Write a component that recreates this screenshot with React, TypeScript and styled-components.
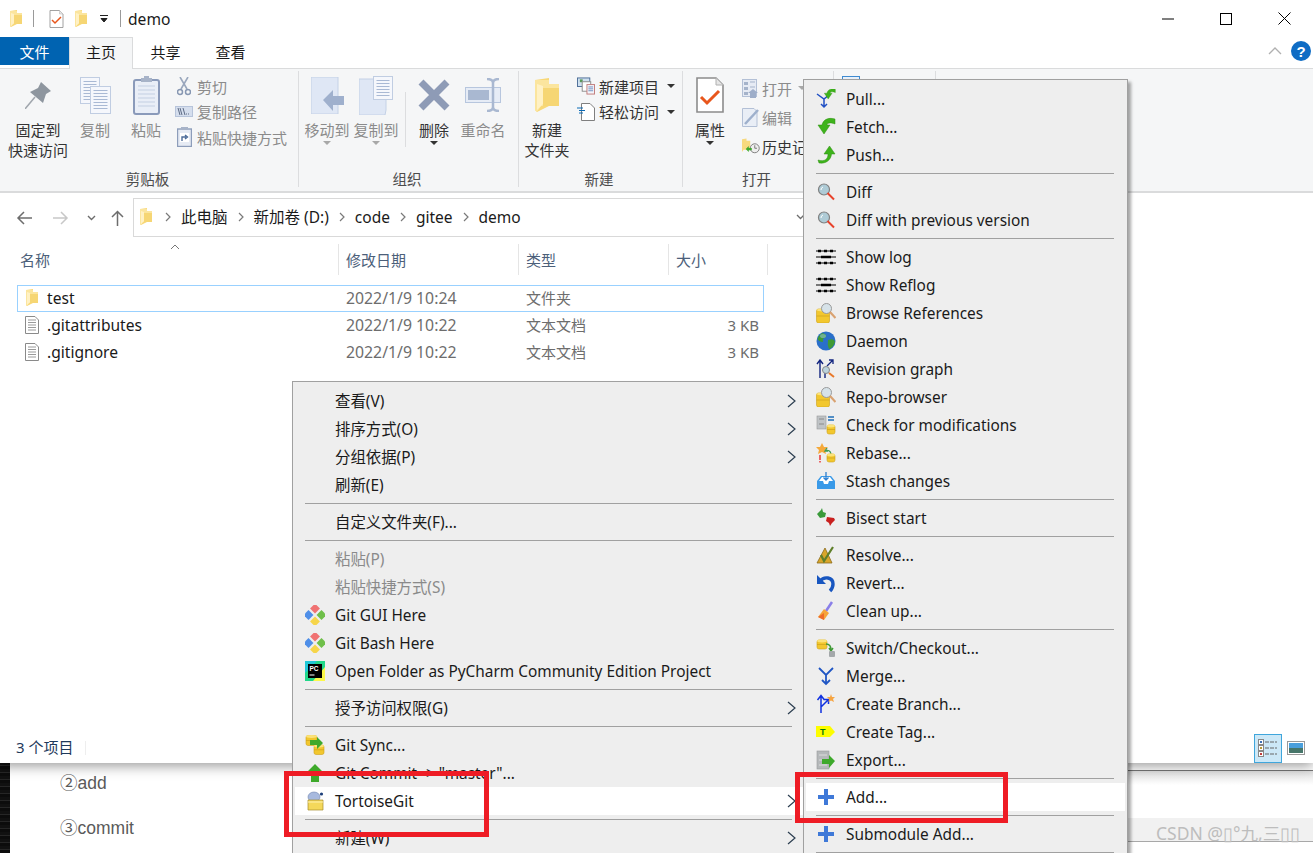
import * as React from "react";
import styled, { createGlobalStyle } from "styled-components";

const UI_FONT = `"Noto Sans", "Noto Sans CJK SC", sans-serif`;

const GlobalStyle = createGlobalStyle`
  html, body {
    margin: 0;
    padding: 0;
    background: #fff;
  }
  body {
    font-family: ${UI_FONT};
    font-size: 15px;
    color: #1a1a1a;
  }
`;

const Page = styled.div`
  position: relative;
  width: 1313px;
  height: 853px;
  overflow: hidden;
  display: flex;
  flex-direction: column;
`;

const ExplorerWindow = styled.div`
  position: relative;
  z-index: 1;
  height: 763px;
  flex: none;
  display: flex;
  flex-direction: column;
  background: #fff;
  box-shadow: 0 3px 12px rgba(0, 0, 0, 0.4);
`;

const TitleBar = styled.div`
  height: 37px;
  display: flex;
  align-items: center;
  padding-left: 10px;
`;

const TitleDivider = styled.div`
  width: 1px;
  height: 17px;
  background: #9a9a9a;
`;

const TitleSpacer = styled.div<{ $width: number }>`
  width: ${(p) => p.$width}px;
  flex: none;
`;

const WindowTitle = styled.span`
  font-size: 15.6px;
`;

const WindowButtons = styled.div`
  margin-left: auto;
  display: flex;
  align-items: center;
`;

const WindowButton = styled.div`
  width: 58px;
  height: 37px;
  display: flex;
  align-items: center;
  justify-content: center;
`;

const TabBar = styled.div`
  height: 32px;
  display: flex;
  box-sizing: border-box;
  border-bottom: 1px solid #dadbdc;
`;

const FileTab = styled.div`
  width: 69px;
  height: 28px;
  background: #0063b1;
  color: #fff;
  display: flex;
  align-items: center;
  justify-content: center;
  font-size: 15px;
`;

const Tab = styled.div<{ $active?: boolean }>`
  width: ${(p) => (p.$active ? 64 : 65)}px;
  height: 32px;
  box-sizing: border-box;
  display: flex;
  align-items: center;
  justify-content: center;
  padding-bottom: 5px;
  font-size: 15px;
  background: ${(p) => (p.$active ? "#f5f6f7" : "transparent")};
  border: 1px solid ${(p) => (p.$active ? "#dadbdc" : "transparent")};
  border-bottom: 0;
`;

const HelpArea = styled.div`
  margin-left: auto;
  display: flex;
  align-items: center;
  gap: 9px;
  padding: 0 2px 4px 0;
`;

const Ribbon = styled.div`
  height: 124px;
  flex: none;
  display: flex;
  box-sizing: border-box;
  background: #f5f6f7;
  border-bottom: 2px solid #dadbdc;
`;

const RibbonGroup = styled.div<{ $width: number }>`
  width: ${(p) => p.$width}px;
  flex: none;
  box-sizing: border-box;
  display: flex;
  flex-direction: column;
  margin: 2px 0 4px;
  border-right: 1px solid #dcdddf;
`;

const GroupBody = styled.div<{ $pad?: number }>`
  flex: 1;
  display: flex;
  align-items: flex-start;
  padding: 5px 0 0 ${(p) => p.$pad ?? 4}px;
`;

const GroupLabel = styled.div`
  height: 17px;
  padding-right: 3px;
  text-align: center;
  font-size: 14.5px;
  line-height: 18px;
  color: #4c4c4c;
`;

const LargeButton = styled.div<{ $width: number; $dim?: boolean }>`
  width: ${(p) => p.$width}px;
  flex: none;
  display: flex;
  flex-direction: column;
  align-items: center;
  text-align: center;
  font-size: 15px;
  line-height: 20px;
  color: ${(p) => (p.$dim ? "#8b8b8b" : "#333")};
  white-space: nowrap;
`;

const LargeIcon = styled.div`
  height: 38px;
  margin-bottom: 6px;
  display: flex;
  align-items: center;
`;

const ButtonCaret = styled.div<{ $dim?: boolean }>`
  width: 0;
  height: 0;
  margin-top: 1px;
  border-left: 4px solid transparent;
  border-right: 4px solid transparent;
  border-top: 4px solid ${(p) => (p.$dim ? "#a8a8a8" : "#333")};
`;

const InlineCaret = styled(ButtonCaret)`
  margin: 0 0 0 4px;
`;

const SmallColumn = styled.div<{ $gap: number; $left: number; $top?: number }>`
  display: flex;
  flex-direction: column;
  gap: ${(p) => p.$gap}px;
  margin-left: ${(p) => p.$left}px;
  margin-top: ${(p) => p.$top ?? 0}px;
`;

const SmallButton = styled.div<{ $dim?: boolean; $gap?: number }>`
  display: flex;
  align-items: center;
  gap: ${(p) => p.$gap ?? 4}px;
  height: 22px;
  font-size: 15px;
  white-space: nowrap;
  color: ${(p) => (p.$dim ? "#8b8b8b" : "#333")};
`;

const SmallIcon = styled.div<{ $center?: boolean }>`
  width: 18px;
  flex: none;
  display: flex;
  justify-content: ${(p) => (p.$center ? "center" : "flex-start")};
`;

const GroupRule = styled.div`
  width: 1px;
  height: 55px;
  margin: 16px 4px 0 4px;
  background: #dcdddf;
  flex: none;
`;

const RibbonRest = styled.div`
  flex: 1;
`;

const NavBar = styled.div`
  height: 50px;
  flex: none;
  display: flex;
  align-items: flex-start;
  padding-top: 5px;
  box-sizing: border-box;
`;

const NavButtons = styled.div`
  width: 133px;
  height: 39px;
  flex: none;
  display: flex;
  align-items: center;
  padding-left: 16px;
  box-sizing: border-box;
`;

const NavIcon = styled.svg<{ $gap?: number }>`
  flex: none;
  margin-left: ${(p) => p.$gap ?? 0}px;
`;

const AddressBox = styled.div`
  width: 697px;
  height: 39px;
  box-sizing: border-box;
  border: 1px solid #d9d9d9;
  display: flex;
  align-items: center;
  padding: 0 0 2px 6px;
  font-size: 15.5px;
`;

const Crumb = styled.span`
  margin: 0 7px;
  white-space: nowrap;
`;

const CrumbArrow = styled.svg`
  width: 6px;
  height: 10px;
  margin: 0 3px;
  flex: none;
`;

const CrumbFolder = styled.div`
  width: 22px;
  display: flex;
`;

const AddressChevron = styled.svg`
  width: 9px;
  height: 6px;
  margin: 0 24px 0 auto;
`;

const ColumnHeader = styled.div`
  height: 34px;
  flex: none;
  display: grid;
  grid-template-columns: 338px 180px 150px 100px;
  font-size: 15px;
  color: #4c607a;
`;

const HeaderCell = styled.div<{ $first?: boolean }>`
  position: relative;
  display: flex;
  align-items: center;
  box-sizing: border-box;
  padding-left: ${(p) => (p.$first ? 20 : 7)}px;
  border-left: ${(p) => (p.$first ? "none" : "1px solid #e5e5e5")};
  margin: 1px 0 2px;
`;

const LastHeader = styled(HeaderCell)`
  border-right: 1px solid #e5e5e5;
`;

const SortCaret = styled.svg`
  position: absolute;
  left: 170px;
  top: 0;
  width: 10px;
  height: 6px;
`;

const FileList = styled.div`
  flex: 1;
  padding: 8px 0 0 17px;
  display: flex;
  flex-direction: column;
  align-items: flex-start;
`;

const FileRow = styled.div<{ $selected?: boolean }>`
  width: 747px;
  height: 27px;
  box-sizing: border-box;
  padding-bottom: 2px;
  display: grid;
  grid-template-columns: 328px 180px 150px 1fr;
  align-items: center;
  font-size: 15.6px;
  border: 1px solid ${(p) => (p.$selected ? "#99d1ff" : "transparent")};
`;

const FileName = styled.div`
  display: flex;
  align-items: center;
  gap: 8px;
  padding-left: 7px;
`;

const FileMeta = styled.div<{ $right?: boolean; $wide?: boolean }>`
  color: #6d6d6d;
  font-size: ${(p) => (p.$wide ? 15.8 : 15)}px;
  text-align: ${(p) => (p.$right ? "right" : "left")};
  padding-right: ${(p) => (p.$right ? 4 : 0)}px;
`;

const StatusBar = styled.div`
  height: 30px;
  flex: none;
  display: flex;
  align-items: center;
  padding-left: 16px;
  font-size: 15px;
  color: #1e395b;
`;

const StatusLabel = styled.span`
  padding-bottom: 4px;
`;

const StatusRule = styled.div`
  width: 1px;
  height: 14px;
  background: #eee;
  margin-left: 12px;
`;

const ViewButtons = styled.div`
  margin-left: auto;
  display: flex;
  align-items: center;
  padding-right: 3px;
`;

const ViewButton = styled.div<{ $active?: boolean }>`
  width: 28px;
  height: 29px;
  box-sizing: border-box;
  display: flex;
  align-items: center;
  justify-content: center;
  background: ${(p) => (p.$active ? "#cce8f7" : "transparent")};
  border: 1px solid ${(p) => (p.$active ? "#3fa6dc" : "transparent")};
`;

const Below = styled.div`
  flex: 1;
  display: flex;
  min-height: 0;
`;

const DarkStrip = styled.div`
  width: 10px;
  background: repeating-linear-gradient(0deg, #0c0c0c 0 3px, #262626 3px 4px, #111 4px 7px);
`;

const Article = styled.div`
  flex: 1;
  padding: 8px 0 0 50px;
  font-family: "Liberation Sans", "Noto Sans CJK SC", sans-serif;
  font-size: 17.5px;
  line-height: 24px;
  color: #5a5a5a;
`;

const ArticleLine = styled.div`
  height: 45px;
`;

const ThirdPanel = styled.div`
  width: 186px;
  margin-top: 7px;
  border-top: 1px solid #777;
  background: linear-gradient(#e0e0e0, #fff 14px);
  display: flex;
  flex-direction: column;
  justify-content: flex-end;
  padding-bottom: 11px;
`;

const Watermark = styled.div`
  height: 24px;
  box-sizing: border-box;
  background: #f1f1f1;
  border-bottom: 1px solid #a8a8a8;
  font-size: 17.5px;
  line-height: 24px;
  padding: 3px 0 0 29px;
  color: #bdbdbd;
  white-space: nowrap;
`;

const Menu = styled.div<{ $left: number; $top: number; $width: number; $layer: number }>`
  position: absolute;
  z-index: ${(p) => p.$layer};
  left: ${(p) => p.$left}px;
  top: ${(p) => p.$top}px;
  width: ${(p) => p.$width}px;
  height: ${(p) => 853 - p.$top + 10}px;
  box-sizing: border-box;
  padding-top: 5px;
  background: #eee;
  border: 1px solid #a0a0a0;
  box-shadow: 3px 3px 3px rgba(0, 0, 0, 0.35);
`;

const MenuRow = styled.div<{ $hover?: boolean; $dim?: boolean }>`
  height: 28px;
  box-sizing: border-box;
  margin: 0 2px;
  padding: 0 7px 0 10px;
  display: flex;
  align-items: center;
  font-size: 15.4px;
  white-space: nowrap;
  background: ${(p) => (p.$hover ? "#fff" : "transparent")};
  color: ${(p) => (p.$dim ? "#8a8a8a" : "#1a1a1a")};
`;

const MenuIcon = styled.div`
  width: 20px;
  height: 20px;
  flex: none;
  margin-right: 10px;
`;

const MenuLabel = styled.span<{ $raised?: boolean }>`
  padding-bottom: ${(p) => (p.$raised ? 2 : 0)}px;
`;

const MenuArrow = styled.svg`
  width: 9px;
  height: 14px;
  margin-left: auto;
`;

const MenuSeparator = styled.div`
  height: 1px;
  margin: 4px 13px 4px 12px;
  background: #a0a0a0;
`;

const RedBox = styled.div<{ $left: number; $top: number; $width: number; $height: number }>`
  position: absolute;
  z-index: 5;
  left: ${(p) => p.$left}px;
  top: ${(p) => p.$top}px;
  width: ${(p) => p.$width}px;
  height: ${(p) => p.$height}px;
  box-sizing: border-box;
  border: 5px solid #ee1c25;
`;

const FolderIcon = ({ w = 12, h = 17 }: { w?: number; h?: number }) => (
  <svg width={w} height={h} viewBox="0 0 12 17">
    <path d="M0 1 L7 0 V14 L1 17 L0 16 Z" fill="#f8d878" />
    <path d="M0 1 H7 V3 H12 V14 H3 L1 17 L0 16 Z" fill="#fbe59e" />
    <path d="M1 3 L4 4 V13 L1 16 Z" fill="#fff1c4" />
    <path d="M4 5 H12 V14 H4 Z" fill="#f6d674" />
  </svg>
);

const CheckDocIcon = ({ w = 15, h = 18 }: { w?: number; h?: number }) => (
  <svg width={w} height={h} viewBox="0 0 28 36">
    <path d="M1 1 H20 L27 8 V35 H1 Z" fill="#fff" stroke="#8c8c8c" strokeWidth="1.6" />
    <path d="M20 1 V8 H27" fill="#e6e6e6" stroke="#b0b0b0" />
    <path d="M5 20 L11 26 L23 14" fill="none" stroke="#e8561c" strokeWidth="3" />
  </svg>
);

const DocLines = ({ x, y, w, h }: { x: number; y: number; w: number; h: number }) => (
  <g>
    <rect x={x} y={y} width={w} height={h} fill="#f5f7fc" stroke="#c0cde2" />
    {Array.from({ length: Math.floor((h - 4) / 3) }).map((_, i) => (
      <line key={i} x1={x + 3} x2={x + w - 3} y1={y + 4 + i * 3} y2={y + 4 + i * 3} stroke="#a9b9d4" />
    ))}
  </g>
);

const PinIcon = () => (
  <svg width="27" height="28" viewBox="0 0 27 28">
    <path d="M0 28 L10 16" stroke="#a0a6ad" strokeWidth="1.5" />
    <path d="M16 1 L26 10 L21 13 L18 22 L5 11 L13 7 Z" fill="#8e969f" />
  </svg>
);

const CopyIcon = () => (
  <svg width="31" height="37" viewBox="0 0 31 37">
    <DocLines x={0.5} y={0.5} w={19} h={26} />
    <DocLines x={10.5} y={9.5} w={20} h={27} />
  </svg>
);

const ClipboardIcon = () => (
  <svg width="27" height="39" viewBox="0 0 27 39">
    <rect x="1" y="4" width="25" height="34" rx="2" fill="#e9eef7" stroke="#8a9aba" strokeWidth="2" />
    {[10, 14, 18, 22, 26, 30].map((y) => (
      <line key={y} x1="5" x2="22" y1={y} y2={y} stroke="#c3cfe2" />
    ))}
    <rect x="8" y="2" width="11" height="4" fill="#a7b3c8" />
    <rect x="11" y="0" width="5" height="3" fill="#a7b3c8" />
  </svg>
);

const ScissorsIcon = () => (
  <svg width="14" height="19" viewBox="0 0 14 19">
    <path d="M3 0 L10 12 M11 0 L4 12" stroke="#9aa7bd" strokeWidth="1.6" fill="none" />
    <circle cx="3" cy="15" r="2.5" fill="none" stroke="#8797b2" strokeWidth="1.5" />
    <circle cx="11" cy="15" r="2.5" fill="none" stroke="#8797b2" strokeWidth="1.5" />
  </svg>
);

const PathIcon = () => (
  <svg width="18" height="11" viewBox="0 0 18 11">
    <rect x="0.5" y="0.5" width="17" height="10" fill="#d5deed" stroke="#b7c4da" />
    <path d="M3 2 L5 9 M5 2 L7 9 M8 2 L10 9" stroke="#5d6b85" strokeWidth="1" />
    <path d="M11 8 H15" stroke="#5d6b85" strokeDasharray="1 1" />
  </svg>
);

const ShortcutIcon = () => (
  <svg width="15" height="20" viewBox="0 0 15 20">
    <rect x="0.5" y="2" width="14" height="17.5" fill="#e6ebf4" stroke="#8d9dba" strokeWidth="1.4" />
    <rect x="4" y="0" width="7" height="3" fill="#a7b3c8" />
    <rect x="3" y="6" width="9" height="9" fill="#fff" />
    <path d="M5 14 V10 H9 M8 8 L10.5 10 L8 12" stroke="#4c6c99" fill="none" strokeWidth="1.4" />
  </svg>
);

const MoveToIcon = () => (
  <svg width="33" height="37" viewBox="0 0 33 37">
    <path d="M0 0 H27 V37 H0 Z" fill="#dfe7f5" stroke="#c4d1e6" />
    <path d="M12 23 L22 13 V19 H33 V28 H22 V34 Z" fill="#9fb0cd" />
  </svg>
);

const CopyToIcon = () => (
  <svg width="34" height="39" viewBox="0 0 34 39">
    <path d="M0 3 H27 V34 L26 39 H0 Z" fill="#dfe7f5" stroke="#c4d1e6" />
    <DocLines x={14.5} y={0.5} w={19} h={23} />
  </svg>
);

const DeleteIcon = () => (
  <svg width="32" height="32" viewBox="0 0 32 32">
    <path d="M3 3 L29 29 M29 3 L3 29" stroke="#8e9bb6" strokeWidth="7" />
  </svg>
);

const RenameIcon = () => (
  <svg width="36" height="34" viewBox="0 0 36 34">
    <rect x="0.5" y="9.5" width="35" height="15" fill="#e6ecf6" stroke="#b7c6de" />
    <rect x="3" y="12" width="21" height="10" fill="#a9b8d1" />
    <path d="M22 1 Q28 1 28 5 V29 Q28 33 22 33 M34 1 Q28 1 28 5 V29 Q28 33 34 33" fill="none" stroke="#a9b8d1" strokeWidth="2.5" />
  </svg>
);

const NewItemIcon = () => (
  <svg width="19" height="18" viewBox="0 0 19 18">
    <rect x="0.5" y="0.5" width="13" height="9" fill="#cfe0f0" stroke="#4a6c96" />
    <rect x="3" y="2" width="3" height="3" fill="#5a9a5a" />
    <rect x="5.5" y="4.5" width="9" height="10" fill="#fff" stroke="#8c8c8c" />
    <rect x="10.5" y="7.5" width="8" height="10" fill="#f3f4fa" stroke="#c07a7a" />
    <path d="M12 10 H17 M12 12 H17 M12 14 H17" stroke="#6f8fc0" />
  </svg>
);

const EasyAccessIcon = () => (
  <svg width="18" height="18" viewBox="0 0 18 18">
    <path d="M4.5 0.5 H13 L17.5 5 V17.5 H4.5 Z" fill="#fff" stroke="#7f7f7f" />
    <path d="M0 5 H6 M2 7.5 H8 M2 10 H6" stroke="#0a6ab5" strokeWidth="1.2" />
  </svg>
);

const OpenIcon = () => (
  <svg width="17" height="19" viewBox="0 0 17 19">
    <rect x="0.5" y="0.5" width="14" height="17" fill="#e6ebf4" stroke="#b3c0d6" />
    <path d="M2 3 H6 V6 H2 Z M2 8 H6 V11 H2 Z M2 13 H6 V16 H2 Z" fill="#a5b3ca" />
    <path d="M8 3 H13 M8 8 H13" stroke="#a5b3ca" />
    <path d="M11 10 L16 14 H14 V19 H8 V14 H6 Z" fill="#9eaec9" />
  </svg>
);

const EditIcon = () => (
  <svg width="18" height="19" viewBox="0 0 18 19">
    <path d="M0.5 0.5 H12 L15 3.5 V18.5 H0.5 Z" fill="#e9eef6" stroke="#b3c0d6" />
    <path d="M3 16 L16 2" stroke="#9eb0cc" strokeWidth="2.5" />
  </svg>
);

const HistoryIcon = () => (
  <svg width="24" height="20" viewBox="0 0 24 20">
    <path d="M0 1 L6 0 V3 H11 V15 H2 L0 18 Z" fill="#f7d97f" />
    <circle cx="17" cy="13" r="6" fill="#eee" stroke="#777" strokeWidth="1.2" />
    <path d="M17 9 V13 H20" stroke="#555" fill="none" />
    <path d="M5 14 L9 10 V12.5 H13 V15.5 H9 V18 Z" fill="#3fa92d" />
  </svg>
);

const SelectIcon = () => (
  <svg width="18" height="18" viewBox="0 0 18 18">
    <rect x="0.5" y="0.5" width="17" height="17" fill="#e9f1fa" stroke="#3f8ad0" />
  </svg>
);

const GreenFetch = () => (
  <path d="M19 2 C12 0 7 3 6 8 H2 L8 17 L14 8 H11 C11 6 14 5 19 7 Z" fill="#3eb31b" stroke="#2f8f12" strokeWidth="0.5" />
);

const GreenPush = () => (
  <path d="M2 15 C9 17 12 14 12 9 H8 L13.500 1 L19 9 H15.500 C15 15 10 19 3 18 Z" fill="#3eb31b" stroke="#2f8f12" strokeWidth="0.5" />
);

const Lens = () => (
  <g>
    <circle cx="8" cy="7.500" r="5.500" fill="#aecbd6" stroke="#808080" strokeWidth="1.2" />
    <path d="M7 5 A3 3 0 0 0 5 8" stroke="#fff" fill="none" />
    <path d="M11.500 11 L18 17.500" stroke="#e8412a" strokeWidth="2" />
  </g>
);

const Coins = ({ x, y, w, h }: { x: number; y: number; w: number; h: number }) => (
  <g>
    <rect x={x} y={y} width={w} height={h} rx="2" fill="#f2c72e" stroke="#cfa11a" strokeWidth="0.6" />
    <path d={`M${x} ${y + h / 2} H${x + w}`} stroke="#cfa11a" strokeWidth="0.7" />
    <ellipse cx={x + w / 2} cy={y + 1} rx={w / 2} ry="1.400" fill="#fbe27a" />
  </g>
);

const DbLensIcon = () => (
  <g>
    <Coins x={0.5} y={6} w={13} h={14} />
    <circle cx="10.500" cy="5.500" r="5" fill="#d6e2e8" stroke="#9a9a9a" />
    <path d="M14 9 L19.500 15" stroke="#d9a271" strokeWidth="2.200" />
  </g>
);

const LogIcon = () => (
  <g stroke="#000">
    <path d="M0 4 H20 M0 10 H20 M0 16 H20" strokeWidth="1" />
    <path d="M2 4 H5 M8 4 H11 M14 4 H17 M5 10 H15 M2 16 H5 M8 16 H11 M14 16 H17" strokeWidth="2.600" />
  </g>
);

const PlusIcon = () => <path d="M8 2 H12 V8 H18 V12 H12 V18 H8 V12 H2 V8 H8 Z" fill="#3f79d8" />;

const GitIcon = () => (
  <g>
    <rect x="6.500" y="0" width="7" height="7" transform="rotate(45 10 3.500)" fill="#f07272" />
    <rect x="13" y="6.500" width="7" height="7" transform="rotate(45 16.500 10)" fill="#6fbf4a" />
    <rect x="6.500" y="13" width="7" height="7" transform="rotate(45 10 16.500)" fill="#f6d54a" />
    <rect x="0" y="6.500" width="7" height="7" transform="rotate(45 3.500 10)" fill="#4f8fe8" />
  </g>
);

const icons: Record<string, React.ReactNode> = {
  pull: (
    <g>
      <path d="M1 5 L8 10 L14 5 M8 10 V18 M5 15 L8 18 L11 15" fill="none" stroke="#1f4fc4" strokeWidth="1.500" />
      <g transform="translate(7 -1) scale(0.65)">
        <GreenFetch />
      </g>
    </g>
  ),
  fetch: <GreenFetch />,
  push: <GreenPush />,
  diff: <Lens />,
  log: <LogIcon />,
  browse: <DbLensIcon />,
  globe: (
    <g>
      <circle cx="10" cy="10" r="9.500" fill="#2a6fc9" />
      <path d="M6 2 Q11 3 10 6 Q6 7 7 11 Q3 11 1.500 8 Q3 4 6 2 Z M12 9 Q18 7 19 11 Q17 17 13 18 Q11 14 12 9 Z" fill="#3f9a35" />
      <ellipse cx="7" cy="5" rx="3" ry="2" fill="#9fc6f0" opacity="0.5" />
    </g>
  ),
  graph: (
    <g>
      <path d="M4 19 V2 M1 5 L4 1 L7 5 M9 19 V8" fill="none" stroke="#12247f" strokeWidth="1.400" />
      <path d="M11 7 L17 1 M13 1 H17 V5" fill="none" stroke="#12247f" strokeWidth="1.300" />
      <circle cx="10" cy="11" r="3.500" fill="#bcd3dd" stroke="#888" />
      <path d="M13 14 L18 18" stroke="#e8782a" strokeWidth="2" />
    </g>
  ),
  check: (
    <g>
      <rect x="1" y="1" width="9" height="13" fill="#bfc3c6" stroke="#999" strokeWidth="0.600" />
      <path d="M3 4 H8 M3 9 H8" stroke="#8a8a8a" />
      <path d="M12 2 H18 M12 5 H18" stroke="#1f6fb8" strokeWidth="1.300" />
      <Coins x={11} y={10} w={8} h={9} />
    </g>
  ),
  rebase: (
    <g>
      <path d="M6 0 L8 4 L12 4 L9 7 L10 11 L6 9 L2 11 L3 7 L0 4 L4 4 Z" fill="#f5a93a" />
      <path d="M4 12 V17 M4 18 V19.500" stroke="#e81c1c" strokeWidth="1.300" />
      <path d="M9 8 Q14 6 15 11 M12 8 L9 8 L11 5" fill="none" stroke="#3e9a54" strokeWidth="1.300" />
      <Coins x={11} y={11} w={8} h={8} />
    </g>
  ),
  stash: (
    <g>
      <path d="M1 10 L5 5 H15 L19 10 V18 H1 Z" fill="#3a9ae8" />
      <path d="M3 10 H7 L8 13 H12 L13 10 H17 L14 6 H6 Z" fill="#fff" />
      <path d="M10 1 V9 M7.500 6.500 L10 9 L12.500 6.500" stroke="#2c7ed0" fill="none" strokeWidth="1.300" />
    </g>
  ),
  bisect: (
    <g>
      <path d="M1 6 L5 2 L6 0 L7 4 L10 5 L9 9 L4 10 Z" fill="#3a9a3a" />
      <path d="M18 10 L11 9 L10 13 L13 15 L14 18 L16 15 L19 12 Z" fill="#c9201f" />
    </g>
  ),
  resolve: (
    <g>
      <path d="M1 18 L9 3 L16 18 Z" fill="#d9a62a" stroke="#8a6a1a" strokeWidth="0.800" />
      <path d="M5 10 L8 16 L17 2" fill="none" stroke="#5f7f2a" strokeWidth="2.200" />
    </g>
  ),
  revert: (
    <g>
      <path d="M4 8 C8 3 17 4 17 11 C17 14 16 16 14 18" fill="none" stroke="#1856c0" strokeWidth="3.400" />
      <path d="M1 2 V11 H10 Z" fill="#1856c0" />
    </g>
  ),
  clean: (
    <g>
      <path d="M16 1 L10 10" stroke="#8a7fe8" strokeWidth="2.500" />
      <path d="M8 8 L13 12 L8 19 L2 16 Z" fill="#f5a43a" />
      <path d="M2 16 L8 12 L8 19 Z" fill="#ee6a2a" />
    </g>
  ),
  switch: (
    <g>
      <Coins x={1} y={2} w={10} h={9} />
      <path d="M10 6 Q15 6 15 12 M13 10 L15 13 L17 10" fill="none" stroke="#3f9a35" strokeWidth="1.500" />
      <rect x="13" y="13" width="6" height="6" rx="1" fill="#a4a8aa" />
    </g>
  ),
  merge: (
    <g fill="none" stroke="#1f56c4" strokeWidth="1.800">
      <path d="M3 2 L10 9 L17 2 M10 9 V18 M6 14 L10 18 L14 14" />
    </g>
  ),
  branch: (
    <g>
      <path d="M5 19 V2 M1.500 6 L5 1.500 L8.500 6 M5 13 L12 6 M8 5.500 H12.500 V10" fill="none" stroke="#0f31e0" strokeWidth="1.500" />
      <path d="M15 0 L16 3 L19 3 L17 5 L18 8 L15 6.500 L12.500 8 L13 5 L11 3 L14 3 Z" fill="#f6a542" />
    </g>
  ),
  tag: (
    <g>
      <path d="M0 4 H14 L19 10 L14 15 H0 Z" fill="#fdfd00" />
      <text x="4" y="13" fontSize="9" fontWeight="700" fill="#0a7a0a" fontFamily="Liberation Sans, sans-serif">
        T
      </text>
    </g>
  ),
  export: (
    <g>
      <rect x="1" y="1" width="12" height="18" fill="#b5b8ba" stroke="#989a9c" strokeWidth="0.600" />
      <path d="M3 5 H11 M3 10 H11 M3 15 H11" stroke="#ddd" />
      <path d="M6 9 H13 V5 L19 11 L13 18 V14 H6 Z" fill="#3ea92b" />
    </g>
  ),
  plus: <PlusIcon />,
  git: <GitIcon />,
  pycharm: (
    <g>
      <rect x="0" y="0" width="20" height="20" fill="#21d789" />
      <path d="M0 0 H12 L0 12 Z" fill="#21c7d7" />
      <path d="M20 20 H8 L20 6 Z" fill="#fcf84a" />
      <rect x="3" y="3" width="14" height="14" fill="#000" />
      <text x="4.500" y="9.500" fontSize="6.500" fontWeight="700" fill="#fff" fontFamily="Liberation Sans, sans-serif">
        PC
      </text>
      <rect x="4.500" y="13.500" width="5" height="1" fill="#fff" />
    </g>
  ),
  sync: (
    <g>
      <Coins x={1} y={0.5} w={11} h={10} />
      <Coins x={9} y={10} w={10} h={9.500} />
      <path d="M5 5 H12 V2 L18 8 L12 14 V10 H5 Z" fill="#3ea92b" />
    </g>
  ),
  commit: (
    <g>
      <path d="M1 10 L10 1 L19 10 L14 10 L14 19 H6 V10 Z" fill="#3ea92b" />
    </g>
  ),
  tortoise: (
    <g>
      <ellipse cx="9" cy="6" rx="6" ry="5" fill="#a7b9de" stroke="#7286b0" strokeWidth="0.600" />
      <circle cx="16.500" cy="3" r="1.600" fill="#1d3f7a" />
      <path d="M3 9 H18 V19 H3 Z" fill="#f4d85a" stroke="#a88d2c" strokeWidth="0.700" />
      <path d="M3 11 H18" stroke="#fff2b0" />
    </g>
  ),
};

const MenuGlyph = ({ name }: { name: string }) => (
  <svg width="20" height="20" viewBox="0 0 20 20">
    {icons[name]}
  </svg>
);

type MenuEntry =
  | "sep"
  | { label: string; icon?: string; arrow?: boolean; dim?: boolean; hover?: boolean };

const contextMenu: MenuEntry[] = [
  { label: "查看(V)", arrow: true },
  { label: "排序方式(O)", arrow: true },
  { label: "分组依据(P)", arrow: true },
  { label: "刷新(E)" },
  "sep",
  { label: "自定义文件夹(F)..." },
  "sep",
  { label: "粘贴(P)", dim: true },
  { label: "粘贴快捷方式(S)", dim: true },
  { label: "Git GUI Here", icon: "git" },
  { label: "Git Bash Here", icon: "git" },
  { label: "Open Folder as PyCharm Community Edition Project", icon: "pycharm" },
  "sep",
  { label: "授予访问权限(G)", arrow: true },
  "sep",
  { label: "Git Sync...", icon: "sync" },
  { label: 'Git Commit -> "master"...', icon: "commit" },
  { label: "TortoiseGit", icon: "tortoise", arrow: true, hover: true },
  "sep",
  { label: "新建(W)", arrow: true },
];

const gitMenu: MenuEntry[] = [
  { label: "Pull...", icon: "pull" },
  { label: "Fetch...", icon: "fetch" },
  { label: "Push...", icon: "push" },
  "sep",
  { label: "Diff", icon: "diff" },
  { label: "Diff with previous version", icon: "diff" },
  "sep",
  { label: "Show log", icon: "log" },
  { label: "Show Reflog", icon: "log" },
  { label: "Browse References", icon: "browse" },
  { label: "Daemon", icon: "globe" },
  { label: "Revision graph", icon: "graph" },
  { label: "Repo-browser", icon: "browse" },
  { label: "Check for modifications", icon: "check" },
  { label: "Rebase...", icon: "rebase" },
  { label: "Stash changes", icon: "stash" },
  "sep",
  { label: "Bisect start", icon: "bisect" },
  "sep",
  { label: "Resolve...", icon: "resolve" },
  { label: "Revert...", icon: "revert" },
  { label: "Clean up...", icon: "clean" },
  "sep",
  { label: "Switch/Checkout...", icon: "switch" },
  { label: "Merge...", icon: "merge" },
  { label: "Create Branch...", icon: "branch" },
  { label: "Create Tag...", icon: "tag" },
  { label: "Export...", icon: "export" },
  "sep",
  { label: "Add...", icon: "plus", hover: true },
  "sep",
  { label: "Submodule Add...", icon: "plus" },
  "sep",
];

const hasCjk = (text: string) => /[^\x00-\x7f]/.test(text);

const MenuItems = ({ items }: { items: MenuEntry[] }) => (
  <>
    {items.map((item, i) =>
      item === "sep" ? (
        <MenuSeparator key={i} />
      ) : (
        <MenuRow key={i} $hover={item.hover} $dim={item.dim}>
          <MenuIcon>{item.icon && <MenuGlyph name={item.icon} />}</MenuIcon>
          <MenuLabel $raised={hasCjk(item.label)}>{item.label}</MenuLabel>
          {item.arrow && (
            <MenuArrow viewBox="0 0 9 14">
              <path d="M1 1 L8 7 L1 13" fill="none" stroke="#2c3e50" strokeWidth="1.200" />
            </MenuArrow>
          )}
        </MenuRow>
      )
    )}
  </>
);

const crumbs = ["此电脑", "新加卷 (D:)", "code", "gitee", "demo"];

const files = [
  { name: "test", date: "2022/1/9 10:24", type: "文件夹", size: "", folder: true },
  { name: ".gitattributes", date: "2022/1/9 10:22", type: "文本文档", size: "3 KB" },
  { name: ".gitignore", date: "2022/1/9 10:22", type: "文本文档", size: "3 KB" },
];

const TextFileIcon = () => (
  <svg width="14" height="18" viewBox="0 0 14 18">
    <path d="M0.5 0.5 H10 L13.500 4 V17.500 H0.500 Z" fill="#fff" stroke="#8a8a8a" />
    {[4, 6.5, 9, 11.500, 14].map((y) => (
      <line key={y} x1="3" x2="11" y1={y} y2={y} stroke="#9a9a9a" />
    ))}
  </svg>
);

export default function App() {
  return (
    <Page>
      <GlobalStyle />
      <ExplorerWindow>
        <TitleBar>
          <FolderIcon />
          <TitleSpacer $width={11} />
          <TitleDivider />
          <TitleSpacer $width={15} />
          <CheckDocIcon />
          <TitleSpacer $width={11} />
          <FolderIcon />
          <TitleSpacer $width={13} />
          <svg width="8" height="8" viewBox="0 0 8 8">
            <path d="M0 0.5 H8 M1 3.500 H7 L4 7 Z" stroke="#222" fill="#222" strokeWidth="1" />
          </svg>
          <TitleSpacer $width={12} />
          <TitleDivider />
          <TitleSpacer $width={7} />
          <WindowTitle>demo</WindowTitle>
          <WindowButtons>
            <WindowButton>
              <svg width="12" height="2" viewBox="0 0 12 2">
                <path d="M0 1 H12" stroke="#000" />
              </svg>
            </WindowButton>
            <WindowButton>
              <svg width="12" height="12" viewBox="0 0 12 12">
                <rect x="0.5" y="0.5" width="11" height="11" fill="none" stroke="#000" />
              </svg>
            </WindowButton>
            <WindowButton>
              <svg width="13" height="13" viewBox="0 0 13 13">
                <path d="M0.5 0.500 L12.500 12.500 M12.500 0.500 L0.500 12.500" stroke="#000" />
              </svg>
            </WindowButton>
          </WindowButtons>
        </TitleBar>
        <TabBar>
          <FileTab>文件</FileTab>
          <Tab $active>主页</Tab>
          <Tab>共享</Tab>
          <Tab>查看</Tab>
          <HelpArea>
            <svg width="14" height="8" viewBox="0 0 14 8">
              <path d="M1 7 L7 1 L13 7" fill="none" stroke="#b0b0b0" strokeWidth="1.300" />
            </svg>
            <svg width="20" height="20" viewBox="0 0 20 20">
              <circle cx="10" cy="10" r="10" fill="#0f6cc4" />
              <text x="10" y="15.500" textAnchor="middle" fontSize="15" fontWeight="700" fill="#fff" fontFamily="Liberation Sans, sans-serif">
                ?
              </text>
            </svg>
          </HelpArea>
        </TabBar>
        <Ribbon>
          <RibbonGroup $width={299}>
            <GroupBody $pad={8}>
              <LargeButton $width={60}>
                <LargeIcon><PinIcon /></LargeIcon>
                固定到
                <br />
                快速访问
              </LargeButton>
              <LargeButton $width={54} $dim>
                <LargeIcon><CopyIcon /></LargeIcon>
                复制
              </LargeButton>
              <LargeButton $width={48} $dim>
                <LargeIcon><ClipboardIcon /></LargeIcon>
                粘贴
              </LargeButton>
              <SmallColumn $gap={3.5} $left={5} $top={-1}>
                <SmallButton $dim><SmallIcon $center><ScissorsIcon /></SmallIcon>剪切</SmallButton>
                <SmallButton $dim><SmallIcon $center><PathIcon /></SmallIcon>复制路径</SmallButton>
                <SmallButton $dim><SmallIcon $center><ShortcutIcon /></SmallIcon>粘贴快捷方式</SmallButton>
              </SmallColumn>
            </GroupBody>
            <GroupLabel>剪贴板</GroupLabel>
          </RibbonGroup>
          <RibbonGroup $width={220}>
            <GroupBody>
              <LargeButton $width={48} $dim>
                <LargeIcon><MoveToIcon /></LargeIcon>
                移动到
                <ButtonCaret $dim />
              </LargeButton>
              <LargeButton $width={50} $dim>
                <LargeIcon><CopyToIcon /></LargeIcon>
                复制到
                <ButtonCaret $dim />
              </LargeButton>
              <GroupRule />
              <LargeButton $width={48}>
                <LargeIcon><DeleteIcon /></LargeIcon>
                删除
                <ButtonCaret />
              </LargeButton>
              <LargeButton $width={50} $dim>
                <LargeIcon><RenameIcon /></LargeIcon>
                重命名
              </LargeButton>
            </GroupBody>
            <GroupLabel>组织</GroupLabel>
          </RibbonGroup>
          <RibbonGroup $width={164}>
            <GroupBody>
              <LargeButton $width={48}>
                <LargeIcon><FolderIcon w={24} h={34} /></LargeIcon>
                新建
                <br />
                文件夹
              </LargeButton>
              <SmallColumn $gap={3.5} $left={6} $top={-1}>
                <SmallButton><SmallIcon><NewItemIcon /></SmallIcon>新建项目<InlineCaret /></SmallButton>
                <SmallButton><SmallIcon><EasyAccessIcon /></SmallIcon>轻松访问<InlineCaret /></SmallButton>
              </SmallColumn>
            </GroupBody>
            <GroupLabel>新建</GroupLabel>
          </RibbonGroup>
          <RibbonGroup $width={151}>
            <GroupBody>
              <LargeButton $width={46}>
                <LargeIcon><CheckDocIcon w={28} h={36} /></LargeIcon>
                属性
                <ButtonCaret />
              </LargeButton>
              <SmallColumn $gap={7} $left={9} $top={1}>
                <SmallButton $dim $gap={2}><SmallIcon><OpenIcon /></SmallIcon>打开<InlineCaret $dim /></SmallButton>
                <SmallButton $dim $gap={2}><SmallIcon><EditIcon /></SmallIcon>编辑</SmallButton>
                <SmallButton $gap={2}><SmallIcon><HistoryIcon /></SmallIcon>历史记录</SmallButton>
              </SmallColumn>
            </GroupBody>
            <GroupLabel>打开</GroupLabel>
          </RibbonGroup>
          <RibbonGroup $width={102}>
            <GroupBody $pad={8}>
              <SelectIcon />
            </GroupBody>
            <GroupLabel>选择</GroupLabel>
          </RibbonGroup>
          <RibbonRest />
        </Ribbon>
        <NavBar>
          <NavButtons>
            <NavIcon width="16" height="14" viewBox="0 0 16 14">
              <path d="M16 7 H2 M8 1 L2 7 L8 13" fill="none" stroke="#6d6d6d" strokeWidth="1.500" />
            </NavIcon>
            <NavIcon $gap={21} width="16" height="14" viewBox="0 0 16 14">
              <path d="M0 7 H14 M8 1 L14 7 L8 13" fill="none" stroke="#c8c8c8" strokeWidth="1.500" />
            </NavIcon>
            <NavIcon $gap={18} width="9" height="6" viewBox="0 0 9 6">
              <path d="M1 1 L4.500 4.500 L8 1" fill="none" stroke="#6d6d6d" strokeWidth="1.400" />
            </NavIcon>
            <NavIcon $gap={15} width="13" height="16" viewBox="0 0 13 16">
              <path d="M6.500 16 V2 M1 7 L6.500 1.500 L12 7" fill="none" stroke="#6d6d6d" strokeWidth="1.500" />
            </NavIcon>
          </NavButtons>
          <AddressBox>
            <CrumbFolder><FolderIcon /></CrumbFolder>
            {crumbs.map((c) => (
              <React.Fragment key={c}>
                <CrumbArrow viewBox="0 0 6 10">
                  <path d="M1 1 L5 5 L1 9" fill="none" stroke="#7a7a7a" strokeWidth="1.200" />
                </CrumbArrow>
                <Crumb>{c}</Crumb>
              </React.Fragment>
            ))}
            <AddressChevron viewBox="0 0 9 6">
              <path d="M1 1 L4.500 4.500 L8 1" fill="none" stroke="#6d6d6d" strokeWidth="1.300" />
            </AddressChevron>
          </AddressBox>
        </NavBar>
        <ColumnHeader>
          <HeaderCell $first>
            名称
            <SortCaret viewBox="0 0 10 6">
              <path d="M1 5 L5 1 L9 5" fill="none" stroke="#777" />
            </SortCaret>
          </HeaderCell>
          <HeaderCell>修改日期</HeaderCell>
          <HeaderCell>类型</HeaderCell>
          <LastHeader>大小</LastHeader>
        </ColumnHeader>
        <FileList>
          {files.map((f) => (
            <FileRow key={f.name} $selected={f.folder}>
              <FileName>
                {f.folder ? <FolderIcon w={14} h={17} /> : <TextFileIcon />}
                {f.name}
              </FileName>
              <FileMeta $wide>{f.date}</FileMeta>
              <FileMeta>{f.type}</FileMeta>
              <FileMeta $right>{f.size}</FileMeta>
            </FileRow>
          ))}
        </FileList>
        <StatusBar>
          <StatusLabel>3 个项目</StatusLabel>
          <StatusRule />
          <ViewButtons>
            <ViewButton $active>
              <svg width="20" height="20" viewBox="0 0 20 20">
                <rect x="0.5" y="1.500" width="5" height="5" fill="#fff" stroke="#888" />
                <rect x="0.5" y="7.500" width="5" height="5" fill="#fff" stroke="#888" />
                <rect x="0.5" y="13.500" width="5" height="5" fill="#fff" stroke="#888" />
                <rect x="2" y="3" width="2" height="2" fill="#3b6fb5" />
                <rect x="2" y="9" width="2" height="2" fill="#b59a3b" />
                <rect x="2" y="15" width="2" height="2" fill="#c23b3b" />
                <path d="M7 4 H19 M7 10 H19 M7 16 H19" stroke="#666" strokeDasharray="4 1" />
              </svg>
            </ViewButton>
            <ViewButton>
              <svg width="18" height="14" viewBox="0 0 18 14">
                <rect x="0.5" y="0.5" width="17" height="13" fill="#fff" stroke="#999" />
                <rect x="2" y="2" width="14" height="5" fill="#4a9fdc" />
                <rect x="2" y="7" width="14" height="5" fill="#47766a" />
              </svg>
            </ViewButton>
          </ViewButtons>
        </StatusBar>
      </ExplorerWindow>
      <Below>
        <DarkStrip />
        <Article>
          <ArticleLine>②add</ArticleLine>
          <ArticleLine>③commit</ArticleLine>
        </Article>
        <ThirdPanel>
          <Watermark>CSDN @▯°九,三▯▯</Watermark>
        </ThirdPanel>
      </Below>
      <Menu $left={292} $top={381} $width={514} $layer={2}>
        <MenuItems items={contextMenu} />
      </Menu>
      <Menu $left={803} $top={79} $width={325} $layer={3}>
        <MenuItems items={gitMenu} />
      </Menu>
      <RedBox $left={284} $top={771} $width={205} $height={66} />
      <RedBox $left={795} $top={772} $width={213} $height={51} />
    </Page>
  );
}
